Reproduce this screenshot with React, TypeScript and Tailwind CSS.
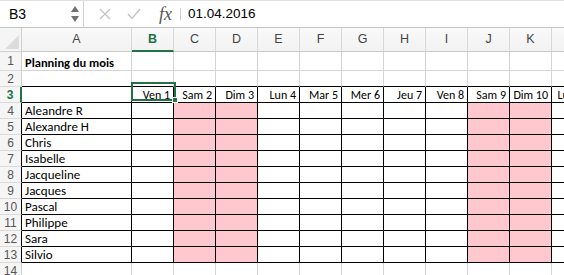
import React from "react";

const COLS = ["A", "B", "C", "D", "E", "F", "G", "H", "I", "J", "K", "L"];
const DATES = ["Ven 1", "Sam 2", "Dim 3", "Lun 4", "Mar 5", "Mer 6", "Jeu 7", "Ven 8", "Sam 9", "Dim 10", "Lun 11"];
const NAMES = ["Aleandre R", "Alexandre H", "Chris", "Isabelle", "Jacqueline", "Jacques", "Pascal", "Philippe", "Sara", "Silvio"];
const PINK = new Set(["C", "D", "J", "K"]);

const cellFont = { fontFamily: "Carlito, 'Liberation Sans', Arial, sans-serif" };

function RowHeader({ n, h, black, active }: { n: number; h: string; black: boolean; active?: boolean }) {
  return (
    <div
      className={`w-[22px] shrink-0 ${h} flex items-center justify-center bg-[#f5f5f5] border-b border-[#dadada] text-[12px] ${
        active ? "text-[#217346] font-bold border-r-2 border-r-[#217346]" : "text-[#555]"
      } ${black && !active ? "border-r border-r-black" : !active ? "border-r border-r-[#cfcfcf]" : ""}`}
      style={{ fontFamily: "'Liberation Sans', Arial, sans-serif" }}
    >
      {n}
    </div>
  );
}

function Cell({
  w,
  h,
  bg = "bg-white",
  rBlack,
  bBlack,
  children,
  right,
  size = "text-[13px]",
  bold,
  overflow,
}: {
  w: string;
  h: string;
  bg?: string;
  rBlack?: boolean;
  bBlack?: boolean;
  children?: React.ReactNode;
  right?: boolean;
  size?: string;
  bold?: boolean;
  overflow?: boolean;
}) {
  return (
    <div
      className={`${w} ${h} shrink-0 relative ${bg} border-r border-b ${rBlack ? "border-r-black" : "border-r-[#d4d4d4]"} ${
        bBlack ? "border-b-black" : "border-b-[#d4d4d4]"
      } flex items-end ${right ? "justify-end pr-[3px]" : "pl-[3px]"} ${overflow ? "overflow-visible z-10" : "overflow-hidden"}`}
    >
      {children !== undefined && (
        <span
          className={`whitespace-nowrap ${size} leading-[14px] text-black ${bold ? "font-bold" : ""}`}
          style={cellFont}
        >
          {children}
        </span>
      )}
    </div>
  );
}

export default function App() {
  const colW = (c: string) => (c === "A" ? "w-[110px]" : "w-[42px]");
  return (
    <div className="w-[564px] h-[275px] overflow-hidden bg-white select-none">
      {/* Formula bar */}
      <div className="h-[28px] flex items-stretch border-t border-[#e0e0e0] border-b border-b-[#c6c6c6]">
        <div className="w-[84px] shrink-0 flex items-center border-r border-[#d0d0d0] pl-[9px] pr-[4px]">
          <span className="text-[14px] text-black flex-1" style={{ fontFamily: "'Liberation Sans', Arial, sans-serif" }}>
            B3
          </span>
          <svg width="10" height="18" viewBox="0 0 10 18" className="mr-[-1px]">
            <path d="M5 1 L9 7 L1 7 Z" fill="#707070" />
            <path d="M5 17 L9 11 L1 11 Z" fill="#707070" />
          </svg>
        </div>
        <div className="flex items-center pl-[15px]">
          <svg width="12" height="12" viewBox="0 0 12 12">
            <path d="M1 1 L11 11 M11 1 L1 11" stroke="#c4c4c4" strokeWidth="1.4" />
          </svg>
          <svg width="14" height="12" viewBox="0 0 14 12" className="ml-[16px]">
            <path d="M1 6 L5 10.5 L13 1" stroke="#c4c4c4" strokeWidth="1.4" fill="none" />
          </svg>
          <span
            className="ml-[18px] text-[18px] italic text-[#555] leading-none"
            style={{ fontFamily: "'Liberation Serif', 'Times New Roman', serif" }}
          >
            fx
          </span>
          <div className="ml-[8px] w-px h-[12px] bg-[#d0d0d0]" />
          <span className="ml-[7px] text-[13.5px] text-black" style={{ fontFamily: "'Liberation Sans', Arial, sans-serif" }}>
            01.04.2016
          </span>
        </div>
      </div>

      {/* Column headers */}
      <div className="flex h-[24px]">
        <div className="w-[22px] shrink-0 h-full bg-[#f5f5f5] border-r border-b border-[#cfcfcf] relative">
          <svg width="14" height="14" viewBox="0 0 14 14" className="absolute right-[2px] bottom-[2px]">
            <path d="M14 0 L14 14 L0 14 Z" fill="#dcdcdc" />
          </svg>
        </div>
        {COLS.map((c) => (
          <div
            key={c}
            className={`${colW(c)} shrink-0 h-full flex items-center justify-center bg-gradient-to-b from-[#f9f9f9] to-[#f2f2f2] border-r border-[#d8d8d8] text-[12.5px] ${
              c === "B" ? "text-[#217346] border-b-2 border-b-[#217346] font-bold" : "text-[#444] border-b border-b-[#c8c8c8]"
            }`}
            style={{ fontFamily: "'Liberation Sans', Arial, sans-serif" }}
          >
            {c}
          </div>
        ))}
      </div>

      {/* Row 1 */}
      <div className="flex">
        <RowHeader n={1} h="h-[19px]" black={false} />
        {COLS.map((c) => (
          <Cell key={c} w={colW(c)} h="h-[19px]" bold size="text-[12.5px]" overflow={c === "A"}>
            {c === "A" ? "Planning du mois" : undefined}
          </Cell>
        ))}
      </div>

      {/* Row 2 */}
      <div className="flex">
        <RowHeader n={2} h="h-[16px]" black={false} />
        {COLS.map((c) => (
          <Cell key={c} w={colW(c)} h="h-[16px]" bBlack />
        ))}
      </div>

      {/* Row 3 */}
      <div className="flex">
        <RowHeader n={3} h="h-[16px]" black active />
        {COLS.map((c, i) => (
          <Cell key={c} w={colW(c)} h="h-[16px]" rBlack bBlack right size="text-[12px]" overflow={c === "B"}>
            {c === "A" ? undefined : DATES[i - 1]}
          </Cell>
        ))}
      </div>

      {/* Rows 4-13 */}
      {NAMES.map((name, r) => (
        <div className="flex" key={name}>
          <RowHeader n={r + 4} h="h-[16px]" black />
          {COLS.map((c) => (
            <Cell key={c} w={colW(c)} h="h-[16px]" rBlack bBlack bg={PINK.has(c) ? "bg-[#ffc7ce]" : "bg-white"}>
              {c === "A" ? name : undefined}
            </Cell>
          ))}
        </div>
      ))}

      {/* Row 14 */}
      <div className="flex">
        <RowHeader n={14} h="h-[16px]" black={false} />
        {COLS.map((c) => (
          <Cell key={c} w={colW(c)} h="h-[16px]" />
        ))}
      </div>

      {/* Selection overlay placed over B3 */}
      <div className="relative">
        <div className="absolute left-[131px] top-[-197px] w-[45px] h-[19px] border-2 border-[#217346] pointer-events-none z-20">
          <div className="absolute right-[-4px] bottom-[-4px] w-[6px] h-[6px] bg-[#217346] border border-white" />
        </div>
      </div>
    </div>
  );
}
